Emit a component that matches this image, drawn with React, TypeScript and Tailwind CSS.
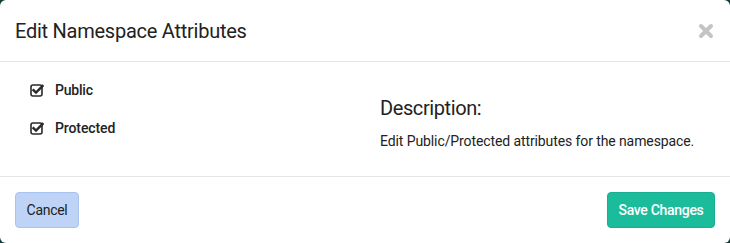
import React from "react";

const font = {
  fontFamily: 'Roboto, "Liberation Sans", sans-serif',
};

const CheckSquare = () => (
  <svg width="14" height="14" viewBox="0 0 14 14" className="shrink-0">
    <rect x="1" y="2" width="11" height="11" rx="2" fill="none" stroke="#2a2a2a" strokeWidth="1.6" />
    <path d="M3.5 7.2 L6 9.6 L12.5 3" fill="none" stroke="#2a2a2a" strokeWidth="2.4" strokeLinecap="square" />
  </svg>
);

const Close = () => (
  <svg width="16" height="16" viewBox="0 0 16 16">
    <path d="M3 3 L13 13 M13 3 L3 13" stroke="#c4c4c4" strokeWidth="4" strokeLinecap="round" />
  </svg>
);

export default function App() {
  return (
    <div className="w-[730px] h-[243px] bg-[#163c39]" style={font}>
      <div className="w-full h-full bg-white rounded-md flex flex-col text-[#222]">
        <div className="h-[62px] px-[15px] flex items-center justify-between border-b border-[#e5e5e5]">
          <h4 className="text-[20px] leading-none tracking-[-0.25px]">Edit Namespace Attributes</h4>
          <button className="pr-[1px]">
            <Close />
          </button>
        </div>
        <div className="h-[114px] px-[15px] grid grid-cols-2">
          <div className="px-[15px] pt-[20px] flex flex-col gap-[22px]">
            <label className="flex items-center gap-[11px] text-[14px] font-medium leading-4 tracking-[-0.2px]">
              <CheckSquare />
              Public
            </label>
            <label className="flex items-center gap-[11px] text-[14px] font-medium leading-4 tracking-[-0.1px]">
              <CheckSquare />
              Protected
            </label>
          </div>
          <div className="px-[15px] pt-[34px]">
            <h4 className="text-[20px] leading-6 tracking-[-0.4px]">Description:</h4>
            <p className="mt-[11px] text-[14px] leading-5 tracking-[-0.1px] whitespace-nowrap">
              Edit Public/Protected attributes for the namespace.
            </p>
          </div>
        </div>
        <div className="flex-1 border-t border-[#e5e5e5] px-[15px] pt-[15px] flex justify-between items-start">
          <button className="h-[36px] w-[64px] rounded-[4px] bg-[#bfd3f6] border border-[#a9c3ef] text-[14px] tracking-[-0.3px] text-[#222]">
            Cancel
          </button>
          <button className="h-[36px] w-[108px] rounded-[4px] bg-[#1abc9c] border border-[#18ae91] text-[14px] tracking-[-0.3px] text-white font-medium">
            Save Changes
          </button>
        </div>
      </div>
    </div>
  );
}
